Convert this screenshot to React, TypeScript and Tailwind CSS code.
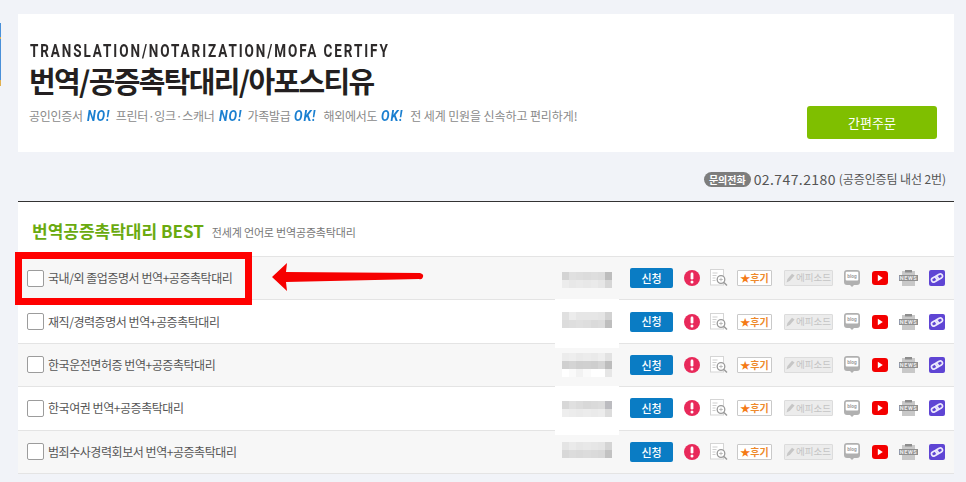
const ROWS = [
  {
    label: '국내/외 졸업증명서 번역+공증촉탁대리',
    box: 'h-[16px] mt-[3px]',
    cells: ['#d4d4d4', '#e0e0e0', '#dedede', '#dcdcdc', '#dedede', '#dcdcdc', '#bdbdbd', '#ececec', '#e8e8e8', '#eaeaea', '#e8e8e8', '#eaeaea', '#e6e6e6', '#d6d6d6'],
  },
  {
    label: '재직/경력증명서 번역+공증촉탁대리',
    box: 'h-[16px] -mt-[3px]',
    cells: ['#e0e0e0', '#ececec', '#e6e6e6', '#e6e6e6', '#e6e6e6', '#e4e4e4', '#d2d2d2', '#dcdcdc', '#dedede', '#e0e0e0', '#dedede', '#dadada', '#dcdcdc', '#bebebe'],
  },
  {
    label: '한국운전면허증 번역+공증촉탁대리',
    box: 'h-[24px]',
    cells: ['#ececec', '#eeeeee', '#eaeaea', '#ececec', '#eaeaea', '#eeeeee', '#e2e2e2', '#d0d0d0', '#d4d4d4', '#cfcfcf', '#d0d0d0', '#cecece', '#d4d4d4', '#bdbdbd', '#ffffff', '#fafafa', '#f2f2f2', '#fafafa', '#ffffff', '#ffffff', '#e6e6e6'],
  },
  {
    label: '한국여권 번역+공증촉탁대리',
    box: 'h-[16px] mt-[2px]',
    cells: ['#d8d8d8', '#e0e0e0', '#dcdcdc', '#d8d8d8', '#dadada', '#dcdcdc', '#bcbcc0', '#eeeeee', '#ececec', '#eaeaea', '#ececec', '#eaeaea', '#ececec', '#dcdcdc'],
  },
  {
    label: '범죄수사경력회보서 번역+공증촉탁대리',
    box: 'h-[16px] -mt-[4px]',
    cells: ['#e4e4e4', '#eaeaea', '#e6e6e6', '#e8e8e8', '#e6e6e6', '#e4e4e4', '#d4d4d4', '#d8d8d8', '#dcdcdc', '#dadada', '#dcdcdc', '#dadada', '#d8d8d8', '#c2c2c2'],
  },
]

function Mosaic({ box, cells }: { box: string; cells: string[] }) {
  return (
    <div className="w-[66px] h-[43px] shrink-0 flex items-center justify-center">
      <div className={`w-[50px] grid grid-cols-7 blur-[0.5px] ${box}`}>
        {cells.map((c, i) => (
          <div key={i} style={{ backgroundColor: c }} />
        ))}
      </div>
    </div>
  )
}

function Alert() {
  return (
    <svg width="16" height="16" viewBox="0 0 16 16" className="shrink-0">
      <circle cx="8" cy="8" r="8" fill="#e8295a" />
      <rect x="6.6" y="2.6" width="2.8" height="7" rx="1.3" fill="#fff" />
      <circle cx="8" cy="12" r="1.5" fill="#fff" />
    </svg>
  )
}

function DocSearch() {
  return (
    <svg width="18" height="18" viewBox="0 0 18 18" className="shrink-0">
      <rect x="0.5" y="0.5" width="13" height="15.5" fill="#fff" stroke="#d5d5d5" />
      <path d="M2.5 4h5M2.5 6.5h4M2.5 9h3M2.5 11.5h3" stroke="#cfcfcf" strokeWidth="1" />
      <circle cx="11" cy="10.5" r="3.8" fill="#fff" stroke="#9a9a9a" strokeWidth="1.3" />
      <path d="M14 13.5l3 3" stroke="#9a9a9a" strokeWidth="1.5" />
      <path d="M9.2 10.5h3.6M11 8.7v3.6" stroke="#b5b5b5" strokeWidth="0.9" />
    </svg>
  )
}

function Pencil() {
  return (
    <svg width="9" height="10" viewBox="0 0 9 10" className="shrink-0">
      <path d="M0.5 9.5L1.5 6 6 0.8 8.6 2.4 4 7.8z" fill="#c6c6c6" />
    </svg>
  )
}

function BlogIcon() {
  return (
    <svg width="16" height="17" viewBox="0 0 16 17" className="shrink-0">
      <path d="M3 0h10a3 3 0 0 1 3 3v9a3 3 0 0 1-3 3h-3l-2 2-2-2H3a3 3 0 0 1-3-3V3a3 3 0 0 1 3-3z" fill="#b0b0b0" />
      <rect x="1.7" y="1.8" width="12.6" height="8.6" rx="1" fill="#fff" />
      <text x="8" y="7.8" textAnchor="middle" fontSize="4.8" fontWeight="700" fill="#a0a0a0" fontFamily="Roboto, sans-serif">blog</text>
    </svg>
  )
}

function YoutubeIcon() {
  return (
    <svg width="16" height="14" viewBox="0 0 16 14" className="shrink-0">
      <rect width="16" height="14" rx="3" fill="#f40000" />
      <path d="M5.8 3.8l5 3.2-5 3.2z" fill="#fff" />
    </svg>
  )
}

function NewsIcon() {
  return (
    <svg width="19" height="16" viewBox="0 0 19 16" className="shrink-0">
      <rect x="3" y="1" width="13" height="15" fill="#c8c8c8" />
      <rect x="6" y="0" width="7" height="2.5" fill="#8d8d8d" />
      <rect y="5" width="19" height="6" fill="#909090" />
      <text x="9.5" y="10" textAnchor="middle" fontSize="5.5" fontWeight="700" letterSpacing="0.6" fill="#eee" fontFamily="Roboto, sans-serif">NEWS</text>
    </svg>
  )
}

function LinkIcon() {
  return (
    <svg width="16" height="16" viewBox="0 0 16 16" className="shrink-0">
      <rect width="16" height="16" rx="2" fill="#5f45d4" />
      <g fill="none" stroke="#ece9fc" strokeWidth="1.6" transform="rotate(-30 8 8)">
        <rect x="2" y="5.8" width="7" height="4.4" rx="2.2" />
        <rect x="7" y="5.8" width="7" height="4.4" rx="2.2" />
      </g>
    </svg>
  )
}

function Row({ label, box, cells, index }: { label: string; box: string; cells: string[]; index: number }) {
  return (
    <div className={`relative h-[43.4px] flex items-center border-b border-[#e4e4e4] ${index % 2 === 0 ? 'bg-[#f7f7f7]' : 'bg-white'}`}>
      {/* leftover white strip from the blurred area */}
      {index > 0 && <div className="absolute left-[537px] -top-[1px] w-[64px] h-[5px] bg-white" />}
      <span className="ml-[9px] w-[17px] h-[17px] shrink-0 rounded-[2px] border border-[#9c9c9c] bg-white" />
      <span className="ml-[4px] w-[469px] shrink-0 text-[12px] tracking-[-0.45px] text-[#555]">{label}</span>
      <div className="ml-[37px]">
        <Mosaic box={box} cells={cells} />
      </div>
      <button className="ml-[10px] w-[43px] h-[20px] shrink-0 rounded-[2px] bg-[#0a7cc4] text-[11px] font-medium text-white">신청</button>
      <div className="ml-[11px] flex items-center">
        <Alert />
      </div>
      <div className="ml-[10px] flex items-center">
        <DocSearch />
      </div>
      <span className="ml-[9px] w-[35px] h-[16px] shrink-0 flex items-center justify-center border border-[#c9c9c9] rounded-[1px] bg-white text-[10px] font-bold text-[#ee8a2c] leading-none">
        <span className="text-[#f47a16]">★</span>후기
      </span>
      <span className="ml-[12px] w-[49px] h-[16px] shrink-0 flex items-center justify-center gap-[1px] border border-[#dcdcdc] rounded-[1px] bg-[#ececec] text-[9.5px] text-[#c4c4c4] leading-none">
        <Pencil />
        에피소드
      </span>
      <div className="ml-[11px] flex items-center">
        <BlogIcon />
      </div>
      <div className="ml-[12px] flex items-center">
        <YoutubeIcon />
      </div>
      <div className="ml-[11px] flex items-center">
        <NewsIcon />
      </div>
      <div className="ml-[11px] flex items-center">
        <LinkIcon />
      </div>
    </div>
  )
}

function Mark({ children }: { children: string }) {
  return (
    <span className="inline-block w-[33px] pl-[4px] whitespace-nowrap align-baseline">
      <b className="inline-block origin-left scale-x-[0.85] text-[15px] leading-[15px] italic font-bold tracking-[1px] text-[#1a7fd0] font-['Roboto',sans-serif]">{children}</b>
    </span>
  )
}

export default function App() {
  return (
    <div className="relative w-[966px] h-[482px] overflow-hidden bg-[#f1f3f8] pt-[14px] pl-[18px] pr-[12px] font-['Noto_Sans_CJK_KR','Noto_Sans',sans-serif]">
      {/* sliver of the side banner */}
      <div className="absolute left-0 top-[23px] w-[1px] h-[63px] bg-[#4a90d9]">
        <div className="mt-[14px] h-[2px] bg-[#e0b050]" />
        <div className="mt-[41px] h-[6px] bg-[#e0b050]" />
      </div>

      {/* Banner */}
      <section className="h-[138px] bg-white pl-[12px] pr-[17px] pt-[26px] flex justify-between">
        <div>
          <p className="h-[22px] origin-left scale-x-[0.75] whitespace-nowrap text-[18px] leading-[22px] font-bold tracking-[2.56px] text-[#2d2a2a] font-['Roboto',sans-serif]">
            TRANSLATION/NOTARIZATION/MOFA CERTIFY
          </p>
          <h1 className="-mt-[1px] -ml-[1px] text-[29px] leading-[38px] font-bold tracking-[-1.65px] text-[#231f20]">
            번역/공증촉탁대리/아포스티유
          </h1>
          <p className="mt-[7px] -ml-[1px] text-[12px] leading-[20px] tracking-[-0.3px] text-[#8a8a8a] whitespace-nowrap">
            공인인증서<Mark>NO!</Mark>프린터·잉크·스캐너<Mark>NO!</Mark>가족발급<Mark>OK!</Mark>해외에서도<Mark>OK!</Mark><span className="tracking-[-0.1px]">전 세계 민원을 신속하고 편리하게!</span>
          </p>
        </div>
        <button className="mt-[66px] w-[130px] h-[33px] rounded-[3px] bg-[#7fbf00] text-[13px] text-white">간편주문</button>
      </section>

      {/* Contact */}
      <div className="h-[49px] flex items-center justify-end pr-[8px] pt-[5px] text-[#555]">
        <span className="h-[15px] px-[5px] rounded-full bg-[#7d7d7d] text-[10px] leading-[15px] font-bold text-white">문의전화</span>
        <span className="ml-[3px] text-[14px] tracking-[0.4px]">02.747.2180</span>
        <span className="ml-[3px] text-[12px] tracking-[-0.1px]">(공증인증팀 내선 2번)</span>
      </div>

      {/* List */}
      <section className="border-t border-[#333]">
        <div className="h-[55px] bg-white border-b border-[#e4e4e4] flex items-center pl-[14px] pt-[4px]">
          <h2 className="text-[17px] font-bold tracking-[0px] text-[#6aaa0f]">번역공증촉탁대리 BEST</h2>
          <span className="ml-[8px] pt-[3px] text-[11px] tracking-[-0.18px] text-[#777]">전세계 언어로 번역공증촉탁대리</span>
        </div>
        {ROWS.map((row, i) => (
          <Row key={row.label} label={row.label} box={row.box} cells={row.cells} index={i} />
        ))}
      </section>

      {/* Annotation over the first row */}
      <div className="absolute left-[15px] top-[252px] w-[237px] h-[53px] border-[7px] border-[#ff0000]" />
      <svg className="absolute left-[270px] top-[262px]" width="156" height="30" viewBox="0 0 156 30">
        <path d="M2 15L17 1 L16 10 L150 11 Q154 12 153 15 Q152 18 149 17 L16 20 L17 29z" fill="#f60000" />
      </svg>
    </div>
  )
}
